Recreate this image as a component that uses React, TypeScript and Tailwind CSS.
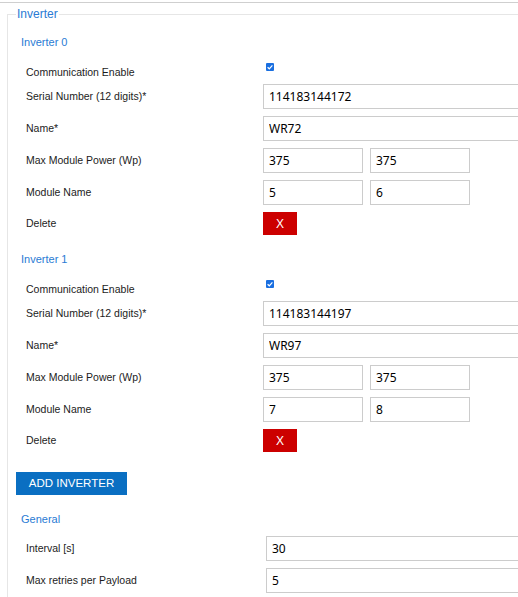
import React from "react";

const labelCls =
  "text-[10.5px] text-[#1c1c1c] [font-family:'Liberation_Sans',Arial,sans-serif]";
const inputCls =
  "h-[25px] border border-[#cccccc] bg-white px-[5px] text-[12px] text-black outline-none [font-family:'Noto_Sans',sans-serif]";
const headingCls =
  "h-[20px] pl-[13px] text-[11px] leading-[20px] text-[#2a7bd4] [font-family:'Liberation_Sans',Arial,sans-serif]";

function Check() {
  return (
    <span className="mt-[3px] ml-[3px] flex h-[8px] w-[8px] items-center justify-center rounded-[1px] bg-[#1a6fe0]">
      <svg viewBox="0 0 8 8" className="h-[8px] w-[8px]">
        <path d="M1.6 4.2 L3.3 5.8 L6.4 2.4" stroke="white" strokeWidth="1.2" fill="none" />
      </svg>
    </span>
  );
}

function Row({
  label,
  children,
  w = "w-[237px]",
  className = "",
}: {
  label: string;
  children: React.ReactNode;
  w?: string;
  className?: string;
}) {
  return (
    <div className={`flex items-center pl-[18px] ${className}`}>
      <div className={`${w} ${labelCls}`}>{label}</div>
      {children}
    </div>
  );
}

function Inverter({
  idx,
  serial,
  name,
  p1,
  p2,
  m1,
  m2,
  first,
}: {
  idx: number;
  serial: string;
  name: string;
  p1: string;
  p2: string;
  m1: string;
  m2: string;
  first?: boolean;
}) {
  return (
    <div className={first ? "mt-[10px]" : "mt-[14px]"}>
      <div className={headingCls}>Inverter {idx}</div>
      <div className="mt-[8px] flex h-[24px] items-start pl-[18px]">
        <div className={`w-[237px] leading-[24px] ${labelCls}`}>Communication Enable</div>
        <Check />
      </div>
      <Row label="Serial Number (12 digits)*">
        <input readOnly value={serial} className={`${inputCls} w-[300px]`} />
      </Row>
      <Row label="Name*" className="mt-[7px]">
        <input readOnly value={name} className={`${inputCls} w-[300px]`} />
      </Row>
      <Row label="Max Module Power (Wp)" className="mt-[7px]">
        <div className="flex gap-[7px]">
          <input readOnly value={p1} className={`${inputCls} w-[100px]`} />
          <input readOnly value={p2} className={`${inputCls} w-[100px]`} />
        </div>
      </Row>
      <Row label="Module Name" className="mt-[7px]">
        <div className="flex gap-[7px]">
          <input readOnly value={m1} className={`${inputCls} w-[100px]`} />
          <input readOnly value={m2} className={`${inputCls} w-[100px]`} />
        </div>
      </Row>
      <Row label="Delete" className="mt-[7px]">
        <button className="flex h-[23px] w-[34px] items-center justify-center bg-[#cc0000] text-[12px] text-white [font-family:'Liberation_Sans',Arial,sans-serif]">
          X
        </button>
      </Row>
    </div>
  );
}

export default function App() {
  return (
    <div className="h-[597px] w-[518px] overflow-hidden bg-white">
      <div className="h-[2px]" />
      <div className="border-t border-[#cfcfcf]" />
      <fieldset className="mt-[3px] ml-[7px] w-[620px] border border-[#e6e6e6] pb-[20px]">
        <legend className="ml-[8px] px-[1px] text-[12px] leading-4 text-[#2a7bd4] [font-family:'Liberation_Sans',Arial,sans-serif]">
          Inverter
        </legend>
        <Inverter idx={0} serial="114183144172" name="WR72" p1="375" p2="375" m1="5" m2="6" first />
        <Inverter idx={1} serial="114183144197" name="WR97" p1="375" p2="375" m1="7" m2="8" />
        <button className="mt-[20px] ml-[8px] flex h-[23px] w-[111px] items-center justify-center bg-[#0a6fc2] text-[11.5px] text-white [font-family:'Liberation_Sans',Arial,sans-serif]">
          ADD INVERTER
        </button>
        <div className={`mt-[14px] ${headingCls}`}>General</div>
        <Row label="Interval [s]" w="w-[240px]" className="mt-[7px]">
          <input readOnly value="30" className={`${inputCls} w-[300px]`} />
        </Row>
        <Row label="Max retries per Payload" w="w-[240px]" className="mt-[7px]">
          <input readOnly value="5" className={`${inputCls} w-[300px]`} />
        </Row>
      </fieldset>
    </div>
  );
}
